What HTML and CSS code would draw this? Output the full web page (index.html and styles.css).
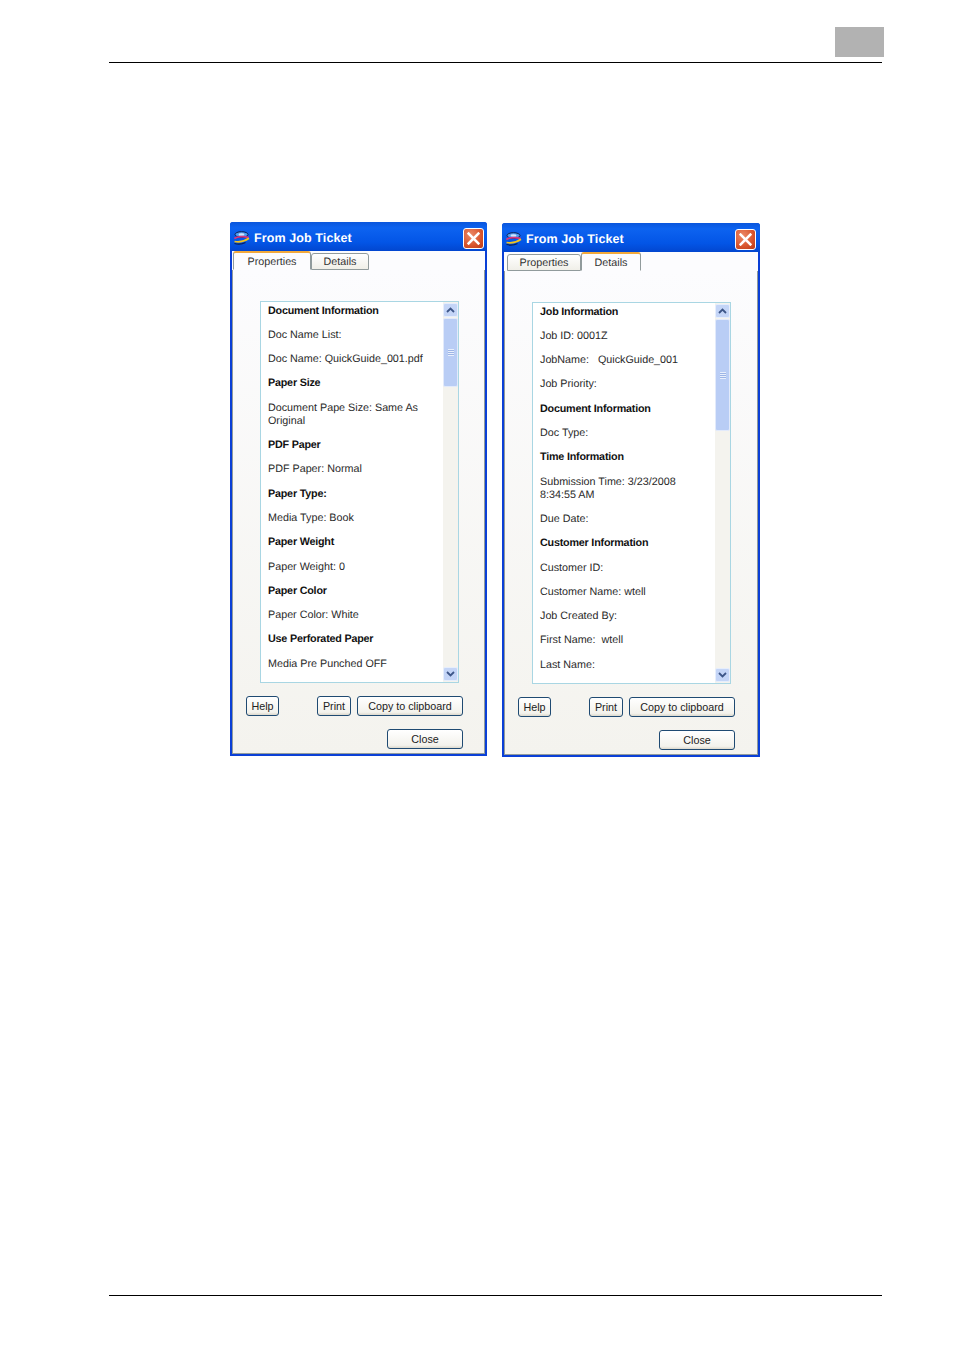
FILE: index.html
```html
<!DOCTYPE html>
<html lang="en">
<head>
  <meta charset="UTF-8">
  <title>From Job Ticket</title>
  <meta name="viewport" content="width=device-width, initial-scale=1.0">
  <link rel="stylesheet" href="styles.css">
</head>
<body>

  <svg class="defs" width="0" height="0" aria-hidden="true">
    <symbol id="app-icon" viewBox="0 0 16 14">
      <ellipse cx="8" cy="3.500" rx="6.500" ry="2.800" fill="#4f9df0" stroke="#0c1f55"/>
      <ellipse cx="8" cy="3.500" rx="3" ry="1.200" fill="#cfe6ff"/>
      <path d="M.8 7.500c3-2.200 10-2.500 14.400-.8" fill="none" stroke="#d8357e" stroke-width="1.800"/>
      <path d="M1 10.500c4 1 9 .5 14.500-3.200" fill="none" stroke="#f2c21e" stroke-width="1.800"/>
      <path d="M1 12.500c4 1 8 .5 11-1" fill="none" stroke="#0a1f55" stroke-width="1.200"/>
    </symbol>
    <symbol id="close-x" viewBox="0 0 12 12">
      <path d="M1.500 1.500l9 9M10.500 1.500l-9 9" fill="none" stroke="#fff" stroke-width="2.400" stroke-linecap="square"/>
    </symbol>
    <symbol id="chev-up" viewBox="0 0 9 6">
      <path d="M1 5l3.500-3.500L8 5" fill="none" stroke="#3d5688" stroke-width="1.800"/>
    </symbol>
    <symbol id="chev-down" viewBox="0 0 9 6">
      <path d="M1 1l3.500 3.500L8 1" fill="none" stroke="#3d5688" stroke-width="1.800"/>
    </symbol>
  </svg>

  <header class="page-head">
    <div class="chapter-tab"></div>
  </header>

  <main class="dialogs">

    <section class="dialog">
      <div class="titlebar">
        <svg class="app-icon"><use href="#app-icon"/></svg>
        <span class="title">From Job Ticket</span>
        <span class="close-btn"><svg class="close-x"><use href="#close-x"/></svg></span>
      </div>
      <div class="tabs">
        <div class="tab tab-active tab-props">Properties</div>
        <div class="tab tab-details">Details</div>
      </div>
      <div class="panel">
        <div class="listbox">
          <div class="list-text">
            <p class="head">Document Information</p>
            <p>Doc Name List:</p>
            <p>Doc Name: QuickGuide_001.pdf</p>
            <p class="head">Paper Size</p>
            <p>Document Pape Size: Same As Original</p>
            <p class="head">PDF Paper</p>
            <p>PDF Paper: Normal</p>
            <p class="head">Paper Type:</p>
            <p>Media Type: Book</p>
            <p class="head">Paper Weight</p>
            <p>Paper Weight: 0</p>
            <p class="head">Paper Color</p>
            <p>Paper Color: White</p>
            <p class="head">Use Perforated Paper</p>
            <p>Media Pre Punched OFF</p>
          </div>
          <div class="scrollbar">
            <span class="sb-btn"><svg class="chev"><use href="#chev-up"/></svg></span>
            <div class="sb-track">
              <div class="sb-thumb thumb-short"><span class="grip"></span></div>
            </div>
            <span class="sb-btn"><svg class="chev"><use href="#chev-down"/></svg></span>
          </div>
        </div>
        <div class="btn-row">
          <button class="btn btn-help">Help</button>
          <button class="btn btn-print">Print</button>
          <button class="btn btn-copy">Copy to clipboard</button>
        </div>
        <div class="btn-row btn-row-close">
          <button class="btn btn-close">Close</button>
        </div>
      </div>
    </section>

    <section class="dialog dialog-second">
      <div class="titlebar">
        <svg class="app-icon"><use href="#app-icon"/></svg>
        <span class="title">From Job Ticket</span>
        <span class="close-btn"><svg class="close-x"><use href="#close-x"/></svg></span>
      </div>
      <div class="tabs">
        <div class="tab tab-props tab-off-first">Properties</div>
        <div class="tab tab-active tab-details">Details</div>
      </div>
      <div class="panel">
        <div class="listbox">
          <div class="list-text">
            <p class="head">Job Information</p>
            <p>Job ID: 0001Z</p>
            <p>JobName: &nbsp; QuickGuide_001</p>
            <p>Job Priority:</p>
            <p class="head">Document Information</p>
            <p>Doc Type:</p>
            <p class="head">Time Information</p>
            <p>Submission Time: 3/23/2008 8:34:55 AM</p>
            <p>Due Date:</p>
            <p class="head">Customer Information</p>
            <p>Customer ID:</p>
            <p>Customer Name: wtell</p>
            <p>Job Created By:</p>
            <p>First Name: &nbsp;wtell</p>
            <p>Last Name:</p>
          </div>
          <div class="scrollbar">
            <span class="sb-btn"><svg class="chev"><use href="#chev-up"/></svg></span>
            <div class="sb-track">
              <div class="sb-thumb thumb-long"><span class="grip"></span></div>
            </div>
            <span class="sb-btn"><svg class="chev"><use href="#chev-down"/></svg></span>
          </div>
        </div>
        <div class="btn-row">
          <button class="btn btn-help">Help</button>
          <button class="btn btn-print">Print</button>
          <button class="btn btn-copy">Copy to clipboard</button>
        </div>
        <div class="btn-row btn-row-close">
          <button class="btn btn-close">Close</button>
        </div>
      </div>
    </section>

  </main>

  <footer class="page-foot"></footer>

</body>
</html>
```

FILE: styles.css
```css
body {
  margin: 0;
  padding: 0;
  background: #fff;
  font-family: "Liberation Sans", Arial, sans-serif;
  color: #222;
  text-rendering: geometricPrecision;
}
.defs {
  display: block;
  height: 0;
}
.page-head {
  margin: 0 72px 0 109px;
  height: 63px;
  box-sizing: border-box;
  border-bottom: 1px solid #000;
  display: flex;
  justify-content: flex-end;
  padding-top: 27px;
}
.chapter-tab {
  width: 49px;
  height: 30px;
  margin-right: -2px;
  background: #b2b2b2;
}
.dialogs {
  display: flex;
  gap: 15px;
  padding: 159px 0 0 230px;
  align-items: flex-start;
}
.dialog {
  width: 257px;
  height: 534px;
  box-sizing: border-box;
  background: #0a3fd6;
  border-radius: 3px 3px 0 0;
  padding: 0 2px 2px;
  display: flex;
  flex-direction: column;
}
.dialog-second {
  width: 258px;
  margin-top: 1px;
}

/* title bar */
.titlebar {
  height: 29px;
  margin: 0 -2px;
  padding: 3px 3px 0;
  box-sizing: border-box;
  display: flex;
  align-items: center;
  background: linear-gradient(#0a56dc, #0d63f0 20%, #0355e6 70%, #0246cf);
  border-radius: 3px 3px 0 0;
  flex: none;
}
.dialog-second .titlebar {
  padding-right: 4px;
}
.app-icon {
  width: 17px;
  height: 14px;
  margin-right: 4px;
}
.title {
  flex: 1;
  color: #fff;
  font-weight: bold;
  font-size: 12.5px;
  letter-spacing: 0.1px;
}
.close-btn {
  width: 21px;
  height: 21px;
  box-sizing: border-box;
  border: 1px solid #fff;
  border-radius: 3px;
  background: radial-gradient(circle at 35% 30%, #ec8a68, #d8542c 60%, #b83a18);
  display: flex;
  align-items: center;
  justify-content: center;
}
.close-x {
  width: 13px;
  height: 13px;
}

/* tabs */
.tabs {
  flex: none;
  height: 19px;
  padding-left: 1px;
  box-sizing: border-box;
  background: #fcfcfe;
  display: flex;
  align-items: flex-end;
  font-size: 10.75px;
  position: relative;
  z-index: 1;
  margin-bottom: -1px;
}
.tab {
  height: 17px;
  box-sizing: border-box;
  border: 1px solid #919b9c;
  border-radius: 3px 3px 0 0;
  background: linear-gradient(#fff, #f0efe8);
  display: flex;
  align-items: center;
  justify-content: center;
  color: #333;
}
.tab-props {
  width: 78px;
}
.tab-details {
  width: 58px;
}
.tab-off-first {
  width: 74px;
  margin-left: 2px;
}
.tab-active {
  height: 19px;
  padding-top: 1px;
  background: #fcfcfe;
  border-top: 2px solid #f2a93b;
  border-bottom-color: #fcfcfe;
}
.dialog-second .tab-details {
  width: 60px;
}

/* panel */
.panel {
  flex: 1;
  background: linear-gradient(#fcfcfe, #f4f3ee);
  border: 1px solid #919b9c;
  padding: 31px 0 0 27px;
  box-sizing: border-box;
  display: flex;
  flex-direction: column;
  align-items: flex-start;
}
.listbox {
  width: 199px;
  height: 382px;
  flex: none;
  box-sizing: border-box;
  border: 1px solid #a9d6e3;
  background: #fff;
  display: flex;
  overflow: hidden;
}
.list-text {
  flex: 1;
  padding: 2.6px 8px 0 7px;
  font-size: 10.75px;
  line-height: 13px;
  overflow: hidden;
  color: #2a2a2a;
}
.list-text p {
  margin: 0 0 11.3px;
}
.list-text .head {
  font-weight: bold;
  color: #111;
  letter-spacing: -0.2px;
}

/* scrollbar */
.scrollbar {
  width: 15px;
  flex: none;
  background: #f4f3ee;
  display: flex;
  flex-direction: column;
  padding: 1px 0;
}
.sb-btn {
  height: 14px;
  flex: none;
  box-sizing: border-box;
  border: 1px solid #e6eefc;
  border-radius: 2px;
  background: #c4d5f7;
  display: flex;
  align-items: center;
  justify-content: center;
}
.chev {
  width: 9px;
  height: 6px;
}
.sb-track {
  flex: 1;
  padding-top: 1px;
}
.sb-thumb {
  box-sizing: border-box;
  border: 1px solid #e2eafb;
  border-radius: 2px;
  background: #b9cdf5;
  display: flex;
  align-items: center;
  justify-content: center;
}
.thumb-short {
  height: 69px;
}
.thumb-long {
  height: 112px;
}
.grip {
  width: 6px;
  height: 7px;
  background: repeating-linear-gradient(#e8effc 0 1px, #9db5e6 1px 2px);
}

/* buttons */
.btn-row {
  display: flex;
  width: 217px;
  height: 20px;
  margin: 13px 0 0 -14px;
}
.btn-row-close {
  justify-content: flex-end;
}
.btn {
  height: 20px;
  flex: none;
  padding: 0;
  box-sizing: border-box;
  border: 1px solid #1f4a72;
  border-radius: 3px;
  background: linear-gradient(#fff, #f3f2ec 85%, #dcd8cc);
  font-family: "Liberation Sans", Arial, sans-serif;
  font-size: 10.75px;
  color: #222;
}
.btn-help {
  width: 33px;
}
.btn-print {
  width: 34px;
  margin-left: 38px;
}
.btn-copy {
  width: 106px;
  margin-left: 6px;
}
.btn-close {
  width: 76px;
}

.page-foot {
  margin: 538px 72px 0 109px;
  border-top: 1px solid #000;
  height: 55px;
}
```
